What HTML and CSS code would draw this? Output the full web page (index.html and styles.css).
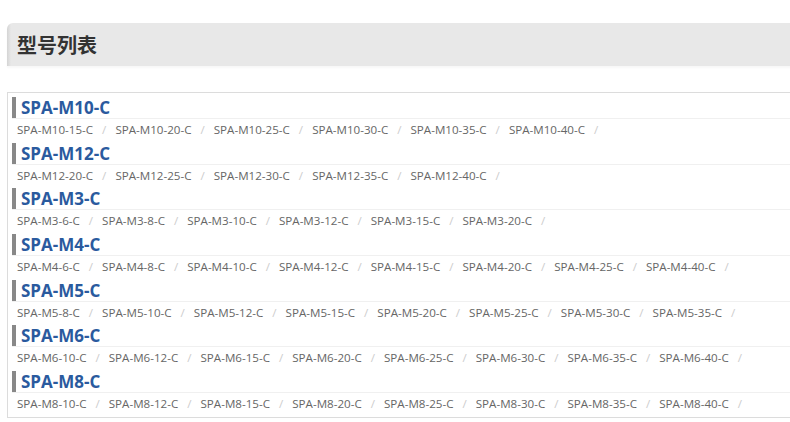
FILE: index.html
```html
<!DOCTYPE html>
<html lang="zh-CN">
<head>
  <meta charset="UTF-8">
  <meta name="viewport" content="width=device-width, initial-scale=1.0">
  <title>型号列表</title>
  <link rel="stylesheet" href="styles.css">
</head>
<body>
  <div class="page">
    <div class="title-bar">
      <h2>型号列表</h2>
    </div>
    <div class="model-box">
      <div class="group">
        <h3>SPA-M10-C</h3>
        <div class="items">
          <a>SPA-M10-15-C</a><span>/</span><a>SPA-M10-20-C</a><span>/</span><a>SPA-M10-25-C</a><span>/</span><a>SPA-M10-30-C</a><span>/</span><a>SPA-M10-35-C</a><span>/</span><a>SPA-M10-40-C</a><span>/</span>
        </div>
      </div>
      <div class="group">
        <h3>SPA-M12-C</h3>
        <div class="items">
          <a>SPA-M12-20-C</a><span>/</span><a>SPA-M12-25-C</a><span>/</span><a>SPA-M12-30-C</a><span>/</span><a>SPA-M12-35-C</a><span>/</span><a>SPA-M12-40-C</a><span>/</span>
        </div>
      </div>
      <div class="group">
        <h3>SPA-M3-C</h3>
        <div class="items">
          <a>SPA-M3-6-C</a><span>/</span><a>SPA-M3-8-C</a><span>/</span><a>SPA-M3-10-C</a><span>/</span><a>SPA-M3-12-C</a><span>/</span><a>SPA-M3-15-C</a><span>/</span><a>SPA-M3-20-C</a><span>/</span>
        </div>
      </div>
      <div class="group">
        <h3>SPA-M4-C</h3>
        <div class="items">
          <a>SPA-M4-6-C</a><span>/</span><a>SPA-M4-8-C</a><span>/</span><a>SPA-M4-10-C</a><span>/</span><a>SPA-M4-12-C</a><span>/</span><a>SPA-M4-15-C</a><span>/</span><a>SPA-M4-20-C</a><span>/</span><a>SPA-M4-25-C</a><span>/</span><a>SPA-M4-40-C</a><span>/</span>
        </div>
      </div>
      <div class="group">
        <h3>SPA-M5-C</h3>
        <div class="items">
          <a>SPA-M5-8-C</a><span>/</span><a>SPA-M5-10-C</a><span>/</span><a>SPA-M5-12-C</a><span>/</span><a>SPA-M5-15-C</a><span>/</span><a>SPA-M5-20-C</a><span>/</span><a>SPA-M5-25-C</a><span>/</span><a>SPA-M5-30-C</a><span>/</span><a>SPA-M5-35-C</a><span>/</span>
        </div>
      </div>
      <div class="group">
        <h3>SPA-M6-C</h3>
        <div class="items">
          <a>SPA-M6-10-C</a><span>/</span><a>SPA-M6-12-C</a><span>/</span><a>SPA-M6-15-C</a><span>/</span><a>SPA-M6-20-C</a><span>/</span><a>SPA-M6-25-C</a><span>/</span><a>SPA-M6-30-C</a><span>/</span><a>SPA-M6-35-C</a><span>/</span><a>SPA-M6-40-C</a><span>/</span>
        </div>
      </div>
      <div class="group">
        <h3>SPA-M8-C</h3>
        <div class="items">
          <a>SPA-M8-10-C</a><span>/</span><a>SPA-M8-12-C</a><span>/</span><a>SPA-M8-15-C</a><span>/</span><a>SPA-M8-20-C</a><span>/</span><a>SPA-M8-25-C</a><span>/</span><a>SPA-M8-30-C</a><span>/</span><a>SPA-M8-35-C</a><span>/</span><a>SPA-M8-40-C</a><span>/</span>
        </div>
      </div>
    </div>
  </div>
</body>
</html>
```

FILE: styles.css
```css
* {
  margin: 0;
  padding: 0;
  box-sizing: border-box;
}
body {
  font-family: "Open Sans", "Noto Sans CJK SC", sans-serif;
  background-color: #fff;
  overflow: hidden;
}
.page {
  padding: 23px 0 0 7px;
}
.title-bar {
  width: calc(100% + 10px);
  height: 43px;
  background: linear-gradient(to right, #d4d4d4 0, #e8e8e8 4px, #e8e8e8 100%);
  border-top-left-radius: 6px;
  box-shadow: 0 2px 2px rgba(0, 0, 0, 0.03);
  display: flex;
  align-items: center;
  padding-left: 10px;
}
.title-bar h2 {
  font-family: "Noto Sans CJK SC", sans-serif;
  font-size: 20px;
  font-weight: bold;
  color: #333;
}
.model-box {
  width: calc(100% + 10px);
  margin-top: 26px;
  border: 1px solid #dcdcdc;
  padding: 4px 0 0 4px;
}
.group h3 {
  border-left: 4px solid #888;
  padding-left: 5px;
  font-size: 17px;
  line-height: 21px;
  font-weight: bold;
  color: #2a5a9e;
}
.items {
  border-top: 1px solid #f0f0f0;
  padding: 0 0 1px 5px;
  font-size: 11.6px;
  line-height: 22.67px;
  color: #666;
}
.items span {
  color: #ccc;
  margin: 0 9px;
}
```
